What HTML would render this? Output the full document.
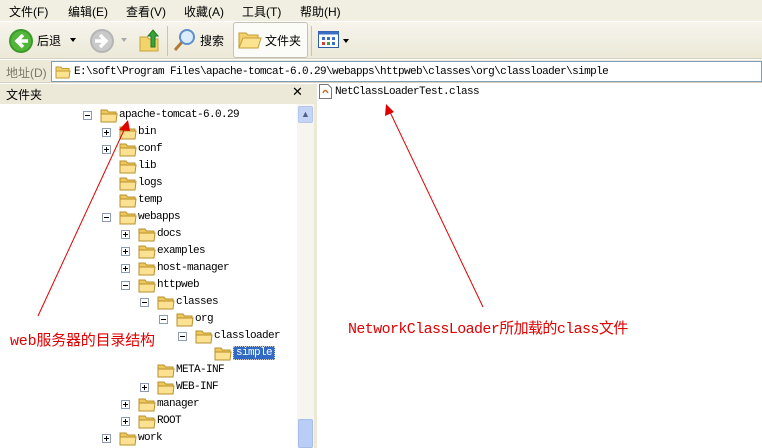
<!DOCTYPE html>
<html><head><meta charset="utf-8"><style>
*{margin:0;padding:0;box-sizing:border-box}
body{width:762px;height:448px;overflow:hidden;position:relative;background:#fff;font-family:"Liberation Sans","Noto Sans CJK SC",sans-serif;font-size:12px;color:#000}
.a{position:absolute}
.m{font-family:"Liberation Mono","Noto Sans CJK SC",monospace;font-size:11px;letter-spacing:-0.6px;white-space:nowrap}
.menu span{position:absolute;top:3px;font-size:12px}
.row{position:absolute;height:17px}
.box{position:absolute;width:9px;height:9px;border:1px solid #8c9bb0;background:#fff;top:4px}
.box:before{content:"";position:absolute;left:1px;top:3px;width:5px;height:1px;background:#000}
.box.p:after{content:"";position:absolute;left:3px;top:1px;width:1px;height:5px;background:#000}
.fold{position:absolute;top:1px;width:18px;height:15px}
.lbl{position:absolute;top:2px}
</style></head><body>
<div class="a" style="left:0;top:0;width:762px;height:22px;background:#f1efe2;border-bottom:1px solid #fff"></div>
<div class="menu">
<span style="left:9px">文件(F)</span><span style="left:68px">编辑(E)</span><span style="left:126px">查看(V)</span><span style="left:184px">收藏(A)</span><span style="left:242px">工具(T)</span><span style="left:300px">帮助(H)</span>
</div>
<div class="a" style="left:0;top:22px;width:762px;height:37px;background:linear-gradient(#f6f4ec,#ece9d8);border-bottom:1px solid #d6d2c2"></div>
<svg class="a" style="left:8px;top:28px" width="26" height="26"><circle cx="13" cy="13" r="12" fill="#3a9a2a"/><circle cx="13" cy="13" r="10" fill="#52b63a"/><path d="M15 7 L9 13 L15 19 M9 13 H20" stroke="#fff" stroke-width="3.5" fill="none"/></svg>
<div class="a" style="left:37px;top:32px;font-size:12px">后退</div>
<div class="a" style="left:70px;top:38px;border:3px solid transparent;border-top:4px solid #000"></div>
<svg class="a" style="left:89px;top:28px" width="26" height="26"><circle cx="13" cy="13" r="12" fill="#b5b5b5"/><circle cx="13" cy="13" r="10" fill="#c9c9c9"/><path d="M11 7 L17 13 L11 19 M17 13 H6" stroke="#fff" stroke-width="3.5" fill="none"/></svg>
<div class="a" style="left:121px;top:38px;border:3px solid transparent;border-top:4px solid #aaa"></div>
<svg class="a" style="left:138px;top:27px" width="24" height="26"><path d="M2 10 H9 L11 12 H20 V24 H2Z" fill="#f3d36b" stroke="#c9a23a"/><path d="M13 20 V9 H10 L15 3 L20 9 H17 V20Z" fill="#3aa33a" stroke="#1e7a1e"/></svg>
<div class="a" style="left:167px;top:26px;width:1px;height:30px;background:#c8c4b4"></div>
<svg class="a" style="left:172px;top:27px" width="26" height="26"><line x1="3" y1="23" x2="10" y2="15" stroke="#b07a3a" stroke-width="3"/><circle cx="15" cy="10" r="7" fill="#dcecff" stroke="#5f8fc8" stroke-width="2"/></svg>
<div class="a" style="left:200px;top:32px">搜索</div>
<div class="a" style="left:233px;top:22px;width:75px;height:36px;border:1px solid #c6c2b2;border-radius:3px;background:#fbfbf8"></div>
<svg class="a" style="left:238px;top:30px" width="24" height="20"><path d="M1 3 H8 L10 5 H20 V18 H1Z" fill="#f3d06a" stroke="#c49c34"/><path d="M5 8 H23 L20 18 H1Z" fill="#fbe38f" stroke="#c49c34"/></svg>
<div class="a" style="left:265px;top:32px">文件夹</div>
<div class="a" style="left:311px;top:26px;width:1px;height:30px;background:#c8c4b4"></div>
<svg class="a" style="left:318px;top:31px" width="22" height="18"><rect x="0.5" y="0.5" width="20" height="16" fill="#fff" stroke="#2c5aa8"/><rect x="0.5" y="0.5" width="20" height="3" fill="#3c6ec8"/><g fill="#3c6ec8"><rect x="4" y="6" width="3" height="3"/><rect x="9" y="6" width="3" height="3"/><rect x="14" y="6" width="3" height="3"/><rect x="4" y="11" width="3" height="3" fill="#d04040"/><rect x="9" y="11" width="3" height="3" fill="#40a040"/><rect x="14" y="11" width="3" height="3"/></g></svg>
<div class="a" style="left:343px;top:39px;border:3px solid transparent;border-top:4px solid #000"></div>
<div class="a" style="left:0;top:60px;width:762px;height:23px;background:#ece9d8;border-bottom:1px solid #d6d2c2"></div>
<div class="a" style="left:6px;top:64px;color:#7a7868">地址(D)</div>
<div class="a" style="left:51px;top:61px;width:711px;height:21px;background:#fff;border:1px solid #7f9db9"></div>
<svg class="a" style="left:55px;top:65px" width="16" height="14"><path d="M1 2 H6 L7 3.5 H14 V13 H1Z" fill="#f3d06a" stroke="#c49c34"/><path d="M1 6 H15 L14 13 H1Z" fill="#fbe38f" stroke="#c49c34"/></svg>
<div class="a m" style="left:74px;top:66px">E:\soft\Program Files\apache-tomcat-6.0.29\webapps\httpweb\classes\org\classloader\simple</div>
<div class="a" style="left:0;top:84px;width:314px;height:20px;background:#ece9d8"></div>
<div class="a" style="left:6px;top:86px;font-size:12px">文件夹</div>
<div class="a" style="left:292px;top:84px;font-size:13px">✕</div>
<div class="a" style="left:314px;top:84px;width:3px;height:364px;background:#ece9d8"></div>
<div class="a" style="left:297px;top:104px;width:17px;height:344px;background:#f6f5f0"></div>
<div class="a" style="left:298px;top:106px;width:15px;height:17px;background:#c6d4f6;border:1px solid #b4c6ee;border-radius:2px;font-size:9px;text-align:center;line-height:15px;color:#4d6185">▲</div>
<div class="a" style="left:298px;top:419px;width:15px;height:29px;background:#b9cdf7;border:1px solid #a8bde8;border-radius:2px"></div>
<svg class="a" style="left:319px;top:84px" width="13" height="15"><path d="M0.5 0.5 H9 L12.5 4 V14.5 H0.5Z" fill="#fff" stroke="#777"/><path d="M4 9 Q6 4 9 9" stroke="#c07030" fill="none" stroke-width="1.5"/></svg>
<div class="a m" style="left:335px;top:86px">NetClassLoaderTest.class</div>
<div id="tree"></div>
<svg class="a" style="left:0;top:0" width="762" height="448">
<line x1="38" y1="316" x2="125" y2="128" stroke="#e00000" stroke-width="1"/>
<path d="M128 120 L119 130 L130 131Z" fill="#e00000"/>
<line x1="483" y1="307" x2="390" y2="112" stroke="#e00000" stroke-width="1"/>
<path d="M386 104 L385 116 L394 112Z" fill="#e00000"/>
</svg>
<div class="a" style="left:10px;top:329px;color:#e00000;font-family:'Liberation Mono','Noto Sans CJK SC',monospace;font-size:15px;letter-spacing:-0.2px;white-space:nowrap">web服务器的目录结构</div>
<div class="a" style="left:348px;top:317px;color:#e00000;font-family:'Liberation Mono','Noto Sans CJK SC',monospace;font-size:15px;letter-spacing:-0.6px;white-space:nowrap">NetworkClassLoader所加载的class文件</div>
<script>
var rows=[[0,'-','apache-tomcat-6.0.29'],[1,'+','bin'],[1,'+','conf'],[1,'','lib'],[1,'','logs'],[1,'','temp'],[1,'-','webapps'],[2,'+','docs'],[2,'+','examples'],[2,'+','host-manager'],[2,'-','httpweb'],[3,'-','classes'],[4,'-','org'],[5,'-','classloader'],[6,'','simple'],[3,'','META-INF'],[3,'+','WEB-INF'],[2,'+','manager'],[2,'+','ROOT'],[1,'+','work']];
var h='';var fold='<svg class="fold" width="18" height="15"><path d="M1 2 H7 L8.5 4 H16 V14 H1Z" fill="#eec85a" stroke="#b8902c"/><path d="M1 6 H17 L16 14 H1Z" fill="#fbe191" stroke="#b8902c"/></svg>';
rows.forEach(function(r,i){var y=107+i*17;var x=83+r[0]*19;
h+='<div class="row" style="top:'+y+'px;left:0;width:296px">';
if(r[1])h+='<div class="box'+(r[1]=='+'?' p':'')+'" style="left:'+x+'px"></div>';
h+='<div style="position:absolute;left:'+(x+17)+'px;top:0">'+fold+'</div>';
var sel=r[2]=='simple';
h+='<div class="lbl m" style="left:'+(x+36)+'px;'+(sel?'background:#316ac5;color:#fff;padding:0 2px;border:1px dotted #ccc;top:1px':'')+'">'+r[2]+'</div></div>';});
document.getElementById('tree').innerHTML=h;
</script>
</body></html>
